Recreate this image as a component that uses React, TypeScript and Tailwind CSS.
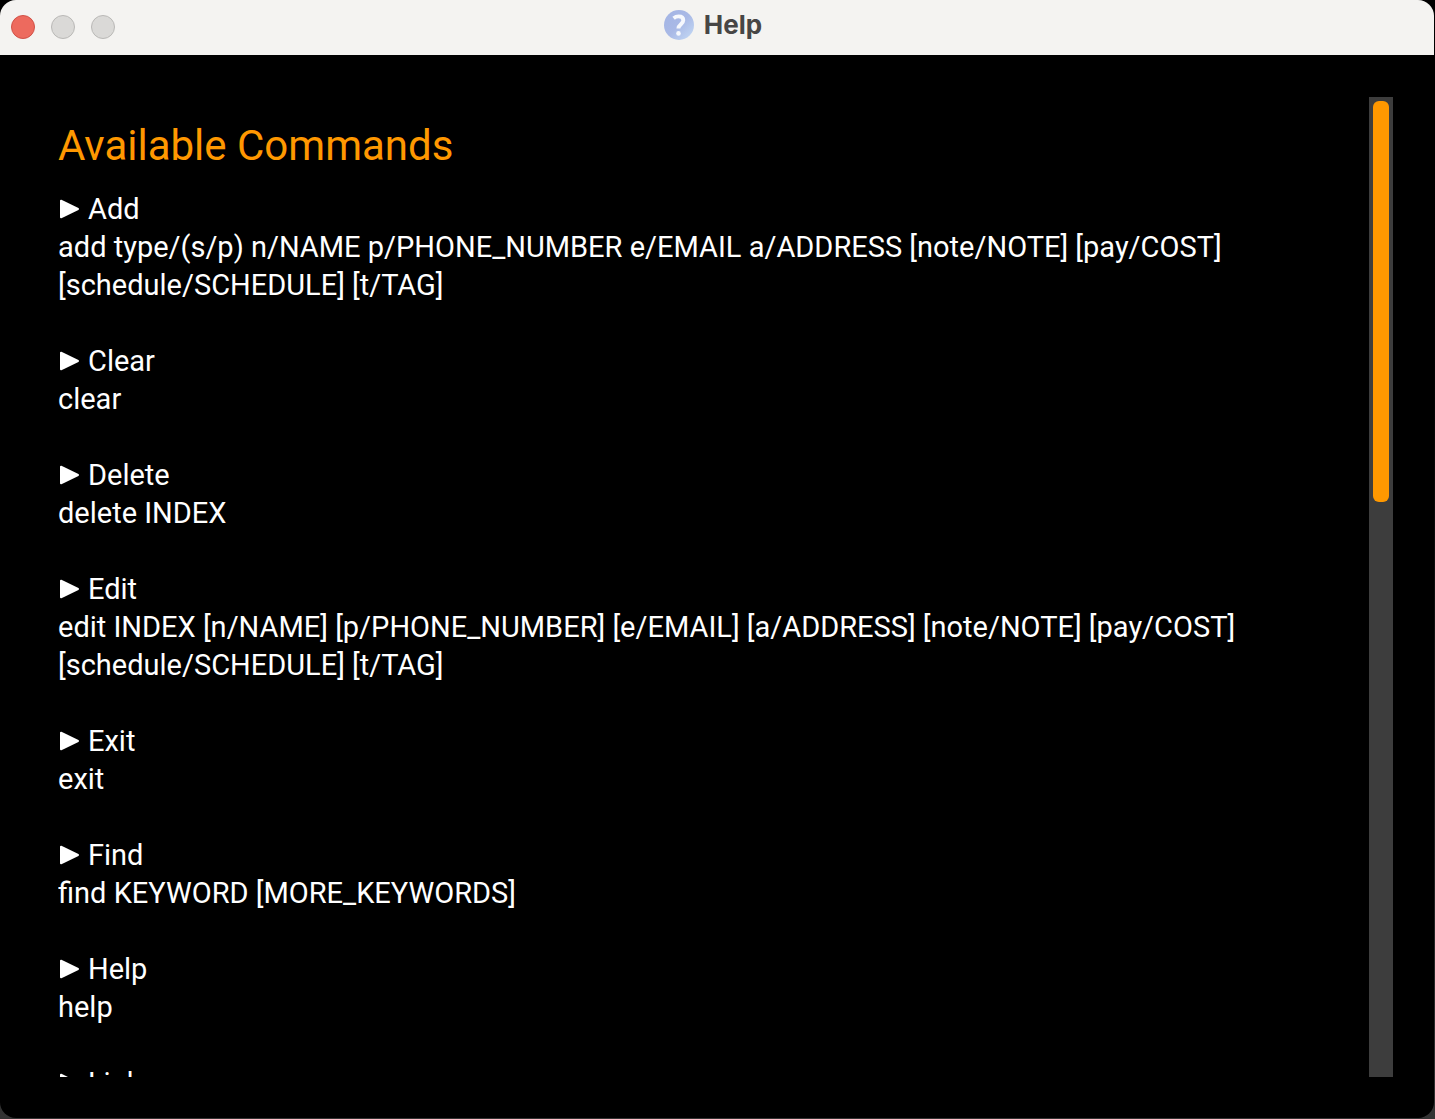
import React from "react";

const commands = [
  { name: "Add", usage: "add type/(s/p) n/NAME p/PHONE_NUMBER e/EMAIL a/ADDRESS [note/NOTE] [pay/COST] [schedule/SCHEDULE] [t/TAG]" },
  { name: "Clear", usage: "clear" },
  { name: "Delete", usage: "delete INDEX" },
  { name: "Edit", usage: "edit INDEX [n/NAME] [p/PHONE_NUMBER] [e/EMAIL] [a/ADDRESS] [note/NOTE] [pay/COST] [schedule/SCHEDULE] [t/TAG]" },
  { name: "Exit", usage: "exit" },
  { name: "Find", usage: "find KEYWORD [MORE_KEYWORDS]" },
  { name: "Help", usage: "help" },
  { name: "Link", usage: "" },
];

function HelpIcon() {
  return (
    <svg viewBox="0 0 30 30" className="size-[30px]" aria-hidden="true">
      <defs>
        <linearGradient id="orb" x1="0" y1="0" x2="1" y2="1">
          <stop offset="0" stopColor="#a3b4e4" />
          <stop offset="0.5" stopColor="#a9b9e6" />
          <stop offset="1" stopColor="#c6dcf6" />
        </linearGradient>
      </defs>
      <circle cx="15" cy="15" r="15" fill="url(#orb)" />
      <path d="M9.600 8.200c1.600-1.300 3.200-1.800 5-1.800 2.900 0 4.700 1.500 4.700 3.900 0 3.800-4.900 4-4.900 8.200" fill="none" stroke="#f6f8fd" strokeWidth="3.900" />
      <circle cx="14.500" cy="23.400" r="2.300" fill="#f6f8fd" />
    </svg>
  );
}

export default function App() {
  return (
    <div className="h-screen bg-linear-to-b from-black to-[#333333] pr-px pb-px">
      <div className="flex h-full flex-col overflow-hidden rounded-2xl bg-black font-[Roboto,sans-serif] text-white">
        <header className="grid h-[55px] shrink-0 grid-cols-[1fr_auto_1fr] items-center bg-[#f4f3f1] px-[11px] pb-0.5">
          <div className="flex gap-4">
            <button aria-label="Close" className="size-6 rounded-full border border-[#d05147] bg-[#ed6a5e]" />
            <button aria-label="Minimize" className="size-6 rounded-full border border-[#b9b8b6] bg-[#dad9d7]" />
            <button aria-label="Zoom" className="size-6 rounded-full border border-[#b9b8b6] bg-[#dad9d7]" />
          </div>
          <div className="flex items-center gap-2.5 pr-2 pb-1">
            <HelpIcon />
            <span className="font-[Inter,sans-serif] text-[26px] leading-8 font-bold text-[#474645]">Help</span>
          </div>
        </header>
        <main className="flex min-h-0 flex-1 pt-[42px] pr-[41px] pb-[41px] pl-[58px]">
          <div className="min-w-0 flex-1 overflow-hidden pr-8">
            <h1 className="mt-[23px] mb-[18px] text-[42px] leading-[52px] text-[#ff9800]">Available Commands</h1>
            {commands.map((c) => (
              <section key={c.name} className="mb-[38px] text-[29px] leading-[38px]">
                <h2 className="flex items-center gap-2">
                  <svg viewBox="0 0 22 20" className="h-5 w-[22px]" aria-hidden="true">
                    <path d="M3 1.700v16.600L20 10z" fill="#fff" stroke="#fff" strokeWidth="2" strokeLinejoin="round" />
                  </svg>
                  {c.name}
                </h2>
                <p>{c.usage}</p>
              </section>
            ))}
          </div>
          <div className="w-6 bg-[#3d3d3d] p-1">
            <div className="h-[401px] rounded-md bg-[#ff9800]" />
          </div>
        </main>
      </div>
    </div>
  );
}
